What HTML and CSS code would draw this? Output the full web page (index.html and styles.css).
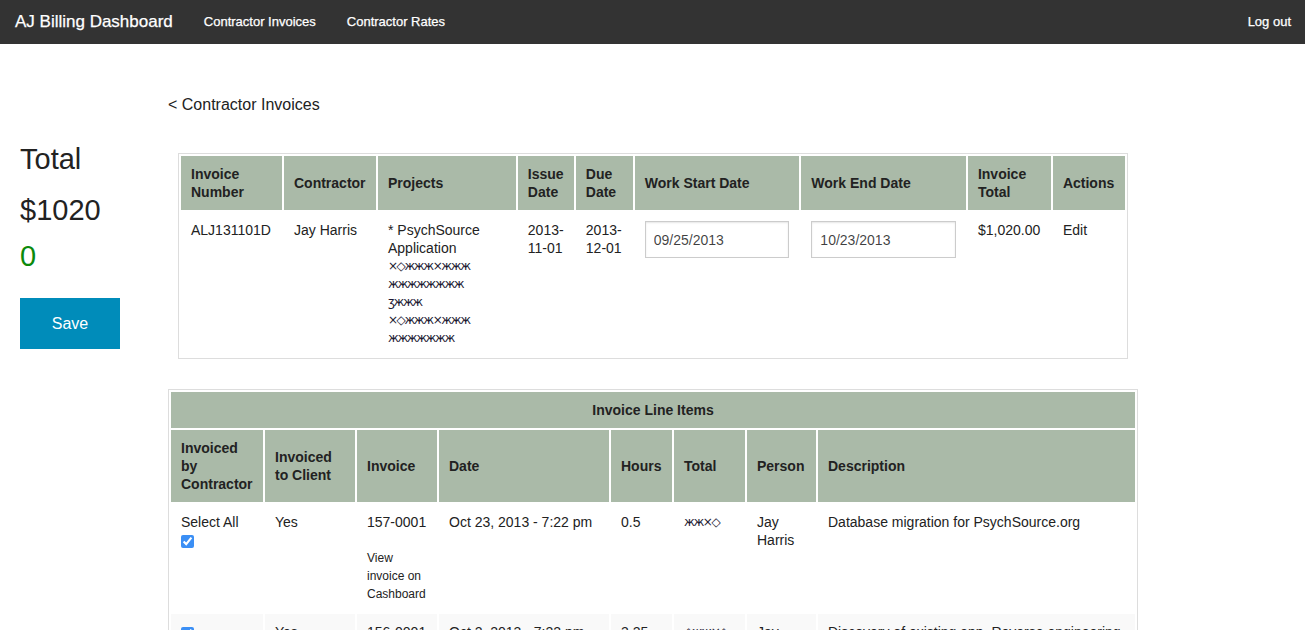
FILE: index.html
```html
<!DOCTYPE html>
<html lang="en">
<head>
<meta charset="utf-8">
<title>AJ Billing Dashboard</title>
<link rel="stylesheet" href="styles.css">
</head>
<body>
<nav class="topbar">
  <a class="brand" href="#">AJ Billing Dashboard</a>
  <ul class="nav-links">
    <li><a href="#">Contractor Invoices</a></li>
    <li><a href="#">Contractor Rates</a></li>
  </ul>
  <a class="logout" href="#">Log out</a>
</nav>

<div class="page">
  <aside class="sidebar">
    <div class="total-label">Total</div>
    <div class="total-value">$1020</div>
    <div class="total-diff">0</div>
    <button class="save-btn" type="button">Save</button>
  </aside>

  <main class="main">
    <a class="back-link" href="#">&lt; Contractor Invoices</a>

    <table class="grid invoice-table">
      <thead>
        <tr>
          <th class="w-num">Invoice Number</th>
          <th class="w-contractor">Contractor</th>
          <th class="w-projects">Projects</th>
          <th class="w-issue">Issue Date</th>
          <th class="w-due">Due Date</th>
          <th class="w-start">Work Start Date</th>
          <th class="w-end">Work End Date</th>
          <th class="w-total">Invoice Total</th>
          <th class="w-actions">Actions</th>
        </tr>
      </thead>
      <tbody>
        <tr>
          <td>ALJ131101D</td>
          <td>Jay Harris</td>
          <td>
            * PsychSource Application
            <span class="redact">×◇жжж×жжж</span>
            <span class="redact">жжжжжжжж</span>
            <span class="redact">ӡжжж</span>
            <span class="redact">×◇жжж×жжж</span>
            <span class="redact">жжжжжжж</span>
          </td>
          <td>2013-11-01</td>
          <td>2013-12-01</td>
          <td><input class="date-input" type="text" value="09/25/2013"></td>
          <td><input class="date-input" type="text" value="10/23/2013"></td>
          <td>$1,020.00</td>
          <td><a class="plain-link" href="#">Edit</a></td>
        </tr>
      </tbody>
    </table>

    <table class="grid items-table">
      <thead>
        <tr>
          <th class="title-cell" colspan="8">Invoice Line Items</th>
        </tr>
        <tr>
          <th class="i-by">Invoiced by Contractor</th>
          <th class="i-client">Invoiced to Client</th>
          <th class="i-invoice">Invoice</th>
          <th class="i-date">Date</th>
          <th class="i-hours">Hours</th>
          <th class="i-total">Total</th>
          <th class="i-person">Person</th>
          <th class="i-desc">Description</th>
        </tr>
      </thead>
      <tbody>
        <tr>
          <td>Select All<input class="check" type="checkbox" checked></td>
          <td>Yes</td>
          <td>157-0001<a class="small-link" href="#">View invoice on Cashboard</a></td>
          <td>Oct 23, 2013 - 7:22 pm</td>
          <td>0.5</td>
          <td><span class="redact">жж×◇</span></td>
          <td>Jay Harris</td>
          <td>Database migration for PsychSource.org</td>
        </tr>
        <tr class="alt">
          <td><input class="check" type="checkbox" checked></td>
          <td>Yes</td>
          <td>156-0001<a class="small-link" href="#">View invoice on Cashboard</a></td>
          <td>Oct 2, 2013 - 7:22 pm</td>
          <td>3.25</td>
          <td><span class="redact">◇жж×◇</span></td>
          <td>Jay Harris</td>
          <td>Discovery of existing app. Reverse engineering of the database schema.</td>
        </tr>
      </tbody>
    </table>
  </main>
</div>
</body>
</html>
```

FILE: styles.css
```css
* {
  box-sizing: border-box;
}

html {
  overflow: hidden;
}

body {
  margin: 0;
  font-family: "Liberation Sans", Arial, sans-serif;
  color: #222;
  background: #fff;
  font-size: 14px;
}

a {
  color: inherit;
  text-decoration: none;
}

/* Top bar */
.topbar {
  display: flex;
  align-items: center;
  height: 44px;
  background: #333;
  color: #fff;
}

.brand {
  font-size: 17px;
  line-height: 44px;
  padding: 0 15px;
  -webkit-text-stroke: 0.25px #fff;
}

.nav-links {
  display: flex;
  list-style: none;
  margin: 0;
  padding: 0 0 0 1px;
  flex: 1;
}

.nav-links a,
.logout {
  display: block;
  font-size: 13px;
  line-height: 44px;
  padding: 0 16px 0 15px;
  -webkit-text-stroke: 0.25px #fff;
}

.logout {
  padding: 0 14px 0 15px;
}

/* Page layout */
.page {
  display: flex;
  align-items: flex-start;
}

.sidebar {
  flex: 0 0 168px;
  padding: 97px 0 0 20px;
}

.total-label,
.total-value,
.total-diff {
  font-size: 29px;
  line-height: 36px;
}

.total-value {
  margin-top: 15px;
}

.total-diff {
  margin-top: 10px;
  color: #0b8a0b;
}

.save-btn {
  display: block;
  margin-top: 24px;
  width: 100px;
  height: 51px;
  border: 0;
  padding: 0;
  background: #008cba;
  color: #fff;
  font-family: "Liberation Sans", Arial, sans-serif;
  font-size: 16px;
  cursor: pointer;
}

.main {
  flex: 0 0 970px;
  padding-top: 51px;
}

.back-link {
  display: block;
  font-size: 16px;
  line-height: 20px;
  color: #222;
}

/* Tables */
.grid {
  border: 1px solid #ddd;
  border-collapse: separate;
  border-spacing: 2px;
  background: #fff;
  font-size: 14px;
  line-height: 18px;
}

.grid th {
  background: #aabaa8;
  color: #222;
  font-weight: bold;
  text-align: left;
  vertical-align: middle;
  padding: 9px 10px;
}

.grid td {
  vertical-align: top;
  padding: 9px 10px;
  color: #222;
}

.grid tr.alt td {
  background: #f9f9f9;
}

.invoice-table {
  width: 950px;
  margin: 38px auto 0;
}

.items-table {
  width: 970px;
  margin-top: 30px;
}

.w-num { width: 101px; }
.w-contractor { width: 92px; }
.w-projects { width: 138px; }
.w-issue { width: 56px; }
.w-due { width: 57px; }
.w-start { width: 165px; }
.w-end { width: 165px; }
.w-total { width: 83px; }
.w-actions { width: 72px; }

.i-by { width: 92px; }
.i-client { width: 90px; }
.i-invoice { width: 80px; }
.i-date { width: 170px; }
.i-hours { width: 61px; }
.i-total { width: 71px; }
.i-person { width: 69px; }
.i-desc { width: 317px; }

.grid th.title-cell {
  text-align: center;
}

.date-input {
  display: block;
  width: 100%;
  height: 37px;
  margin: 0;
  padding: 8px;
  border: 1px solid #ccc;
  box-shadow: inset 0 1px 2px rgba(0, 0, 0, 0.1);
  background: #fff;
  font-family: "Liberation Sans", Arial, sans-serif;
  font-size: 14px;
  color: rgba(0, 0, 0, 0.75);
}

.redact {
  display: block;
  font-family: "DejaVu Sans", sans-serif;
  font-size: 12px;
  line-height: 18px;
  letter-spacing: -1.4px;
  color: #1d1a33;
  white-space: nowrap;
}

.check {
  display: block;
  width: 13px;
  height: 13px;
  margin: 4px 0 0 0;
  accent-color: #3b8ff5;
}

.small-link {
  display: block;
  margin-top: 18px;
  font-size: 12px;
  line-height: 18px;
  color: #222;
}
```
